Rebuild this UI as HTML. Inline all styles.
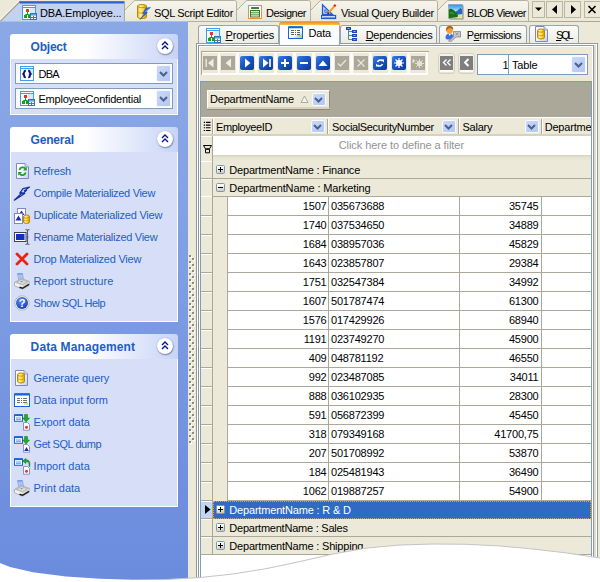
<!DOCTYPE html>
<html><head><meta charset="utf-8"><title>DBA.EmployeeConfidential</title>
<style>
*{box-sizing:border-box;margin:0;padding:0}
html,body{width:600px;height:582px;overflow:hidden;background:#ece9d8}
body{position:relative;font-family:"Liberation Sans",sans-serif;font-size:11px;color:#000;line-height:13px}
.a{position:absolute}
.t{position:absolute;white-space:pre;height:13px;line-height:13px;letter-spacing:-0.3px}
u{text-decoration:underline}
/* sidebar */
#side{left:0;top:22px;width:188px;height:560px;background:linear-gradient(#8aa8e6 0,#86a4e5 150px,#7595e0 380px,#6b8bdd 560px)}
.ph{position:absolute;left:10px;width:168px;height:25px;border-radius:3px 3px 0 0;background:linear-gradient(90deg,#fff 0,#fff 45%,#c7d4f7 100%)}
.ph b{position:absolute;left:21px;top:6px;font-size:11px;color:#215dc6;letter-spacing:.35px;white-space:pre}
.pb{position:absolute;left:10px;width:168px;background:#d6dff7;border:1px solid #fff;border-top:0}
.circ{position:absolute;left:147px;top:4px;width:16px;height:16px;border-radius:8px;background:#fff;box-shadow:.5px 1px 1.5px rgba(80,90,130,.7),0 0 1px rgba(90,110,170,.5)}
.lnk{position:absolute;left:34px;color:#215dc6;white-space:pre;letter-spacing:-0.33px;height:13px;line-height:13px}
.ic{position:absolute;width:16px;height:16px;overflow:visible}
.combo{position:absolute;left:15px;width:158px;height:21px;background:#fff;border:1px solid #7f9db9}
.ddb{position:absolute;width:15px;height:16px;border-radius:2px;background:linear-gradient(135deg,#cad9fc,#b3c6f3);border:1px solid #f6f9ff}
</style></head>
<body>
<svg width="0" height="0" style="position:absolute"><defs><linearGradient id="gold" x1="0" y1="0" x2="1" y2="0"><stop offset="0" stop-color="#e8b010"/><stop offset=".3" stop-color="#fff4a0"/><stop offset=".65" stop-color="#ffd030"/><stop offset="1" stop-color="#d09a00"/></linearGradient><linearGradient id="pg" x1="0" y1="0" x2="1" y2="1"><stop offset="0" stop-color="#fff"/><stop offset=".5" stop-color="#f4f8fe"/><stop offset="1" stop-color="#b8d0f4"/></linearGradient><linearGradient id="dg" x1="0" y1="0" x2="1" y2="1"><stop offset="0" stop-color="#fff"/><stop offset=".55" stop-color="#fff"/><stop offset="1" stop-color="#8cbcf4"/></linearGradient><linearGradient id="sky" x1="0" y1="0" x2="0" y2="1"><stop offset="0" stop-color="#2c8ce8"/><stop offset=".45" stop-color="#a8dcf8"/><stop offset="1" stop-color="#e8f0c0"/></linearGradient><radialGradient id="hb" cx=".4" cy=".3" r=".8"><stop offset="0" stop-color="#5a8cf0"/><stop offset="1" stop-color="#1038b8"/></radialGradient><linearGradient id="eb" x1="0" y1="0" x2=".25" y2="1"><stop offset="0" stop-color="#fff"/><stop offset=".45" stop-color="#f6f4ee"/><stop offset="1" stop-color="#cfcab8"/></linearGradient></defs></svg>
<div id="side" class="a">
<div class="ph" style="top:12px"><span class="t" style="left:20.6px;top:6px;letter-spacing:-0.224px;color:#215dc6;font-size:12px;font-weight:bold;height:14px;line-height:14px;">Object</span><div class="circ"><svg class="a" style="left:4px;top:3px" width="8" height="9" viewBox="0 0 8 9"><path d="M1 4L4 1L7 4M1 8L4 5L7 8" fill="none" stroke="#00138c" stroke-width="1.4"/></svg></div></div>
<div class="pb" style="top:37px;height:56px">
</div>
<div class="combo" style="top:41px"></div>
<div class="combo" style="top:66px"></div>
<span class="t" style="left:38.5px;top:46px;letter-spacing:-0.708px;">DBA</span>
<span class="t" style="left:38.5px;top:71px;letter-spacing:-0.226px;">EmployeeConfidential</span>
<div class="ddb" style="left:156px;top:43px;width:15px;height:17px"><svg class="a" style="left:2px;top:5px" width="9" height="6" viewBox="0 0 9 6"><path d="M1 1L4.5 4.5L8 1" fill="none" stroke="#4d6185" stroke-width="2"/></svg></div>
<div class="ddb" style="left:156px;top:68px;width:15px;height:17px"><svg class="a" style="left:2px;top:5px" width="9" height="6" viewBox="0 0 9 6"><path d="M1 1L4.5 4.5L8 1" fill="none" stroke="#4d6185" stroke-width="2"/></svg></div>
<svg class="a" style="left:20px;top:44px;overflow:visible" width="17" height="17" viewBox="0 0 17 17"><rect x=".5" y=".5" width="13" height="14" fill="#fff" stroke="#3aa0f0"/><rect x="1" y="2" width="12" height="1" fill="#3aa0f0"/><rect x="8" y="3" width="5" height="6" fill="#dbe9fa"/><path d="M5.800 4.800Q4.200 4.800 4.200 6.200T2.500 8Q4.200 8 4.200 9.800T5.800 11.200M8.200 4.800Q9.800 4.800 9.800 6.200T11.500 8Q9.800 8 9.800 9.800T8.200 11.200" fill="none" stroke="#0c0c7c" stroke-width="1.900"/></svg>
<svg class="a" style="left:20px;top:69px;overflow:visible" width="17" height="17" viewBox="0 0 17 17"><rect x=".5" y=".5" width="13" height="14" fill="#fff" stroke="#3aa0f0"/><rect x="1" y="2" width="12" height="1" fill="#3aa0f0"/><rect x="8" y="3" width="5" height="6" fill="#dbe9fa"/><path d="M5.5 7v2M3.5 11v-1.5h4V11" stroke="#18a018" stroke-width="1" fill="none"/><rect x="4" y="4" width="3" height="3" fill="#f03020"/><rect x="2" y="10" width="3" height="3" fill="#18a018"/><rect x="6" y="10" width="3" height="3" fill="#18a018"/><rect x="8.5" y="8.5" width="6" height="6" fill="#fff" stroke="#2878c0"/><rect x="9" y="9" width="5" height="1.6" fill="#5aa2e6"/><path d="M9 12.5h5M11.5 11v3" stroke="#707070" stroke-width="1"/></svg>
<div class="ph" style="top:105px"><span class="t" style="left:20.6px;top:6px;letter-spacing:-0.2px;color:#215dc6;font-size:12px;font-weight:bold;height:14px;line-height:14px;">General</span><div class="circ"><svg class="a" style="left:4px;top:3px" width="8" height="9" viewBox="0 0 8 9"><path d="M1 4L4 1L7 4M1 8L4 5L7 8" fill="none" stroke="#00138c" stroke-width="1.4"/></svg></div></div>
<div class="pb" style="top:130px;height:170px">
</div>
<span class="t" style="left:33.6px;top:143px;letter-spacing:-0.147px;color:#215dc6;">Refresh</span>
<span class="t" style="left:33.6px;top:165px;letter-spacing:-0.32px;color:#215dc6;">Compile Materialized View</span>
<span class="t" style="left:33.6px;top:187px;letter-spacing:-0.238px;color:#215dc6;">Duplicate Materialized View</span>
<span class="t" style="left:33.6px;top:209px;letter-spacing:-0.289px;color:#215dc6;">Rename Materialized View</span>
<span class="t" style="left:33.6px;top:231px;letter-spacing:-0.246px;color:#215dc6;">Drop Materialized View</span>
<span class="t" style="left:33.6px;top:253px;letter-spacing:0.058px;color:#215dc6;">Report structure</span>
<span class="t" style="left:33.6px;top:275px;letter-spacing:-0.489px;color:#215dc6;">Show SQL Help</span>
<svg class="a" style="left:16px;top:141px;overflow:visible" width="17" height="17" viewBox="0 0 17 17"><path d="M.5 .5H9L12.5 4V15.5H.5Z" fill="url(#pg)" stroke="#8484c4"/><path d="M9 .5V4H12.5" fill="#cfe0f8" stroke="#8484c4" stroke-width=".8"/><path d="M3.5 7A3.2 3.2 0 0 1 9.3 5.8" fill="none" stroke="#20a020" stroke-width="1.8"/><path d="M10.8 3.8V7.6H7Z" fill="#20a020"/><path d="M9.6 9.5A3.2 3.2 0 0 1 3.8 10.7" fill="none" stroke="#20a020" stroke-width="1.8"/><path d="M2.2 12.7V8.9H6Z" fill="#20a020"/></svg>
<svg class="a" style="left:14px;top:164px;overflow:visible" width="17" height="17" viewBox="0 0 17 17"><path d="M15.500 1L9 2.600 5.800 7.200 8.200 6.700 0.300 14.200 10.800 7.600 8.600 8 12.500 4.300 10.500 4.800Z" fill="#c4d0f6" stroke="#1632a0" stroke-width="1.200" stroke-linejoin="round"/></svg>
<svg class="a" style="left:14px;top:186px;overflow:visible" width="17" height="17" viewBox="0 0 17 17"><rect x="3.5" y=".5" width="8" height="10" fill="#fff" stroke="#8484c4"/><path d="M7.5 2.5L10.5 7H4.5Z" fill="#1830b0"/><rect x=".5" y="5.500" width="8" height="10" fill="#fff" stroke="#8484c4"/><path d="M4.500 7.5L7.5 12.5H1.5Z" fill="#1830b0"/><path d="M9.5 8.6A3.0 1.6 0 0 1 15.5 8.6V13.9A3.0 1.6 0 0 1 9.5 13.9Z" fill="url(#gold)" stroke="#b88a00" stroke-width="1"/><path d="M9.5 8.6A3.0 1.6 0 0 0 15.5 8.6" fill="none" stroke="#b88a00" stroke-width=".8"/><path d="M9.5 11.25A3.0 1.6 0 0 0 15.5 11.25" fill="none" stroke="#c89a10" stroke-width=".8"/></svg>
<svg class="a" style="left:14px;top:207px;overflow:visible" width="17" height="17" viewBox="0 0 17 17"><rect x=".5" y="3.500" width="11.500" height="9" fill="#fff" stroke="#404048"/><rect x="2" y="5" width="8.500" height="6" fill="#1030c0"/><path d="M11.5 .5Q13.500 .5 13.500 2V14Q13.500 15.5 11.5 15.5M15.5 .5Q13.500 .5 13.500 2M13.500 14Q13.500 15.5 15.5 15.5" fill="none" stroke="#585868" stroke-width="1.1"/><path d="M12.5 8h2" stroke="#585868"/></svg>
<svg class="a" style="left:14px;top:229px;overflow:visible" width="17" height="17" viewBox="0 0 17 17"><path d="M3 3L13 13M13 3L3 13" stroke="#e82418" stroke-width="2.800" stroke-linecap="round"/></svg>
<svg class="a" style="left:14px;top:251px;overflow:visible" width="17" height="17" viewBox="0 0 17 17"><path d="M3.500 .6H8.500L9.600 6.500H4.600Z" fill="#a9c2f6" stroke="#7f9ae4" stroke-width=".6"/><path d="M3.500 .9H8.500" stroke="#6c86d8" stroke-width=".9"/><path d="M.5 9.500L7 5.500 15.500 8.500V12L8.500 16.200 .5 12.800Z" fill="#f2f2f2" stroke="#8c8c8c" stroke-width=".6"/><path d="M.5 9.500L7 5.500 15.500 8.500 8.500 12.500Z" fill="#b9b9b9"/><path d="M3.500 9.200L7.200 7 12.500 8.800 8.600 11.200Z" fill="#d9d9d9"/><path d="M8.500 12.500L15.500 8.500V12L8.500 16.200Z" fill="#d2d2d2"/><path d="M5.500 14.300L8.600 15.300 15 11.300" fill="none" stroke="#1c1c1c" stroke-width="1.500"/><path d="M6.800 8.600h1.600" stroke="#30b040" stroke-width="1"/></svg>
<svg class="a" style="left:14px;top:273px;overflow:visible" width="17" height="17" viewBox="0 0 17 17"><circle cx="8" cy="8" r="7.2" fill="#f4f4f4" stroke="#a8a8b0" stroke-width=".8"/><circle cx="8" cy="8" r="6" fill="url(#hb)"/><text x="8" y="12" text-anchor="middle" font-family="Liberation Sans,sans-serif" font-weight="bold" font-size="11" fill="#fff">?</text></svg>
<div class="ph" style="top:312px"><span class="t" style="left:20.6px;top:6px;letter-spacing:0.12px;color:#215dc6;font-size:12px;font-weight:bold;height:14px;line-height:14px;">Data Management</span><div class="circ"><svg class="a" style="left:4px;top:3px" width="8" height="9" viewBox="0 0 8 9"><path d="M1 4L4 1L7 4M1 8L4 5L7 8" fill="none" stroke="#00138c" stroke-width="1.4"/></svg></div></div>
<div class="pb" style="top:337px;height:148px">
</div>
<span class="t" style="left:33.6px;top:350px;letter-spacing:-0.053px;color:#215dc6;">Generate query</span>
<span class="t" style="left:33.6px;top:372px;letter-spacing:-0.06px;color:#215dc6;">Data input form</span>
<span class="t" style="left:33.6px;top:394px;letter-spacing:0.003px;color:#215dc6;">Export data</span>
<span class="t" style="left:33.6px;top:416px;letter-spacing:-0.456px;color:#215dc6;">Get SQL dump</span>
<span class="t" style="left:33.6px;top:438px;letter-spacing:0.06px;color:#215dc6;">Import data</span>
<span class="t" style="left:33.6px;top:460px;letter-spacing:-0.069px;color:#215dc6;">Print data</span>
<svg class="a" style="left:15px;top:348px;overflow:visible" width="17" height="17" viewBox="0 0 17 17"><path d="M.5 .5H9L12.5 4V15.5H.5Z" fill="url(#pg)" stroke="#8484c4"/><path d="M9 .5V4H12.5" fill="#cfe0f8" stroke="#8484c4" stroke-width=".8"/><path d="M2.5 4.6A3.5 1.6 0 0 1 9.5 4.6V11.4A3.5 1.6 0 0 1 2.5 11.4Z" fill="url(#gold)" stroke="#b88a00" stroke-width="1"/><path d="M2.5 4.6A3.5 1.6 0 0 0 9.5 4.6" fill="none" stroke="#b88a00" stroke-width=".8"/><path d="M2.5 8.0A3.5 1.6 0 0 0 9.5 8.0" fill="none" stroke="#c89a10" stroke-width=".8"/></svg>
<svg class="a" style="left:14px;top:370px;overflow:visible" width="17" height="17" viewBox="0 0 17 17"><rect x=".5" y="2" width="15" height="12.500" fill="#fff" stroke="#1464dc"/><rect x=".5" y="1.300" width="15" height="2.200" rx=".6" fill="#1464dc"/><path d="M3 6.500h3M7 6.500h1M9 6.500h4M3 8.500h3M7 8.500h1M9 8.500h4M3 10.500h3M7 10.500h1M9 10.500h4" stroke="#707070" stroke-width="1"/><path d="M10 12h3.500v-1.200" fill="none" stroke="#e0d020" stroke-width="1.200"/></svg>
<svg class="a" style="left:14px;top:392px;overflow:visible" width="17" height="17" viewBox="0 0 17 17"><rect x=".5" y=".8" width="8" height="6.500" fill="#fff" stroke="#1464dc"/><rect x=".5" y=".3" width="8" height="1.800" fill="#1464dc"/><path d="M2 4h5M2 5.700h5" stroke="#5a9ae8" stroke-width="1"/><path d="M9.500 8.500h4L15.500 10.500V16.200H9.500Z" fill="#fff" stroke="#8484c4" stroke-width=".9"/><circle cx="12.500" cy="13.200" r="1.500" fill="#f03020"/><path d="M10.500 .5h3V4h2L12 8 8.800 4h1.700Z" fill="#20a828" stroke="#107018" stroke-width=".5"/></svg>
<svg class="a" style="left:14px;top:414px;overflow:visible" width="17" height="17" viewBox="0 0 17 17"><rect x=".5" y=".8" width="8" height="6.500" fill="#fff" stroke="#1464dc"/><rect x=".5" y=".3" width="8" height="1.800" fill="#1464dc"/><path d="M2 4h5M2 5.700h5" stroke="#5a9ae8" stroke-width="1"/><path d="M9.500 8.500h4L15.500 10.500V16.200H9.500Z" fill="#fff" stroke="#8484c4" stroke-width=".9"/><path d="M12.500 11L14.800 15H10.200Z" fill="#1830b0"/><path d="M10.500 .5h3V4h2L12 8 8.800 4h1.700Z" fill="#20a828" stroke="#107018" stroke-width=".5"/></svg>
<svg class="a" style="left:14px;top:436px;overflow:visible" width="17" height="17" viewBox="0 0 17 17"><rect x=".5" y=".8" width="8" height="6.500" fill="#fff" stroke="#1464dc"/><rect x=".5" y=".3" width="8" height="1.800" fill="#1464dc"/><path d="M2 4h5M2 5.700h5" stroke="#5a9ae8" stroke-width="1"/><path d="M9.500 8.500h4L15.500 10.500V16.200H9.500Z" fill="#fff" stroke="#8484c4" stroke-width=".9"/><circle cx="12.500" cy="13.200" r="1.500" fill="#f03020"/><path d="M15.500 8V5.500Q15.500 3 12.500 3V5L8.800 2.500 12.500 0V1.200Q16.500 1.200 16.300 5.500V8Z" fill="#20a828" stroke="#107018" stroke-width=".5" transform="translate(-.5 .5)"/></svg>
<svg class="a" style="left:14px;top:458px;overflow:visible" width="17" height="17" viewBox="0 0 17 17"><path d="M3.500 .6H8.500L9.600 6.500H4.600Z" fill="#a9c2f6" stroke="#7f9ae4" stroke-width=".6"/><path d="M3.500 .9H8.500" stroke="#6c86d8" stroke-width=".9"/><path d="M.5 9.500L7 5.500 15.500 8.500V12L8.500 16.200 .5 12.800Z" fill="#f2f2f2" stroke="#8c8c8c" stroke-width=".6"/><path d="M.5 9.500L7 5.500 15.500 8.500 8.500 12.500Z" fill="#b9b9b9"/><path d="M3.500 9.200L7.200 7 12.500 8.800 8.600 11.200Z" fill="#d9d9d9"/><path d="M8.500 12.500L15.500 8.500V12L8.500 16.200Z" fill="#d2d2d2"/><path d="M5.500 14.300L8.600 15.300 15 11.300" fill="none" stroke="#1c1c1c" stroke-width="1.500"/><path d="M6.800 8.600h1.600" stroke="#30b040" stroke-width="1"/></svg>
</div>
<svg class="a" style="left:0;top:0" width="600" height="23" viewBox="0 0 600 23">
<defs><linearGradient id="tg" x1="0" y1="0" x2="0" y2="1"><stop offset="0" stop-color="#f6f5ee"/><stop offset="1" stop-color="#e9e7d9"/></linearGradient></defs>
<rect x="0" y="21" width="600" height="1" fill="#aca899"/>
<path d="M426.5 21.5L447 1Q447.6 .5 449 .5L526.5 .5Q528.5 .5 528.5 2.5L528.5 21.5Z" fill="url(#tg)" stroke="#b4b1a0" stroke-width="1"/>
<path d="M299.5 21.5L320 1Q320.6 .5 322 .5L435.5 .5Q437.5 .5 437.5 2.5L437.5 21.5Z" fill="url(#tg)" stroke="#b4b1a0" stroke-width="1"/>
<path d="M225.5 21.5L246 1Q246.6 .5 248 .5L308.5 .5Q310.5 .5 310.5 2.5L310.5 21.5Z" fill="url(#tg)" stroke="#b4b1a0" stroke-width="1"/>
<path d="M113.5 21.5L134 1Q134.6 .5 136 .5L234.5 .5Q236.5 .5 236.5 2.5L236.5 21.5Z" fill="url(#tg)" stroke="#b4b1a0" stroke-width="1"/>
<path d="M0 22L0 21.5L20 1.500L124.500 1.500L124.500 22Z" fill="#c3d2f1"/>
<path d="M-1.200 21.5L19.300 1" fill="none" stroke="#fbfaf2" stroke-width="1.200"/>
<path d="M0 21.5L20.5 1" fill="none" stroke="#a39f8c" stroke-width="1.100"/>
<rect x="19.500" y="1.200" width="105" height="2.300" fill="#2f60c9"/>
<rect x="124" y="3" width="1" height="18" fill="#aca899"/>
<rect x="532.5" y="1.5" width="12" height="16" fill="none" stroke="#b9b6a6"/>
<rect x="546.5" y="1.5" width="16" height="16" fill="none" stroke="#b9b6a6"/>
<rect x="564.5" y="1.5" width="16" height="16" fill="none" stroke="#b9b6a6"/>
<rect x="584.5" y="1.5" width="16" height="16" fill="none" stroke="#b9b6a6"/>
<path d="M535 7.5L542 7.5L538.5 11Z" fill="#000"/>
<path d="M557 5L557 14L552 9.5Z" fill="#000"/>
<path d="M571 5L571 14L576 9.5Z" fill="#000"/>
<path d="M588.5 6L595.5 13M595.5 6L588.5 13" stroke="#000" stroke-width="1.6" fill="none"/>
<rect x="0" y="21" width="188" height="1" fill="#a9beeb"/>
</svg>
<span class="t" style="left:40px;top:7px;letter-spacing:-0.151px;">DBA.Employee...</span>
<span class="t" style="left:154px;top:7px;letter-spacing:-0.328px;">SQL Script Editor</span>
<span class="t" style="left:266px;top:7px;letter-spacing:-0.504px;">Designer</span>
<span class="t" style="left:341px;top:7px;letter-spacing:-0.369px;">Visual Query Builder</span>
<span class="t" style="left:467px;top:7px;letter-spacing:-0.639px;">BLOB Viewer</span>
<svg class="a" style="left:22px;top:5px;overflow:visible" width="17" height="17" viewBox="0 0 17 17"><rect x=".5" y=".5" width="13" height="14" fill="#fff" stroke="#3aa0f0"/><rect x="1" y="2" width="12" height="1" fill="#3aa0f0"/><rect x="8" y="3" width="5" height="6" fill="#dbe9fa"/><path d="M5.5 7v2M3.5 11v-1.5h4V11" stroke="#18a018" stroke-width="1" fill="none"/><rect x="4" y="4" width="3" height="3" fill="#f03020"/><rect x="2" y="10" width="3" height="3" fill="#18a018"/><rect x="6" y="10" width="3" height="3" fill="#18a018"/><rect x="8.5" y="8.5" width="6" height="6" fill="#fff" stroke="#2878c0"/><rect x="9" y="9" width="5" height="1.6" fill="#5aa2e6"/><path d="M9 12.5h5M11.5 11v3" stroke="#707070" stroke-width="1"/></svg>
<svg class="a" style="left:137px;top:3px;overflow:visible" width="17" height="17" viewBox="0 0 17 17"><path d="M0.5 3.1A4.5 1.6 0 0 1 9.5 3.1V13.9A4.5 1.6 0 0 1 0.5 13.9Z" fill="url(#gold)" stroke="#b88a00" stroke-width="1"/><path d="M0.5 3.1A4.5 1.6 0 0 0 9.5 3.1" fill="none" stroke="#b88a00" stroke-width=".8"/><path d="M0.5 8.5A4.5 1.6 0 0 0 9.5 8.5" fill="none" stroke="#c89a10" stroke-width=".8"/><path d="M13.5 4.5L8 9.5h2.5L3 16.5l4.5-6H5.5L9 5Z" fill="#2a6ae0" stroke="#1a48b0" stroke-width=".5"/><path d="M12 5.5L8.5 9" stroke="#9cc4ff" stroke-width=".8"/></svg>
<svg class="a" style="left:248px;top:5px;overflow:visible" width="17" height="17" viewBox="0 0 17 17"><rect x=".5" y=".5" width="13" height="13" fill="#fff" stroke="#e0944a"/><rect x="3" y="2" width="8" height="2" rx=".5" fill="#2e8b2e"/><rect x="2.5" y="5.5" width="9" height="6.5" fill="#e8f4e0" stroke="#2a7a32"/><path d="M3 7.7h8M3 9.8h8" stroke="#3c9a3c" stroke-width="1"/><path d="M5.2 6v6M7.2 6v6M9.2 6v6" stroke="#e8a880" stroke-width=".7"/></svg>
<svg class="a" style="left:321px;top:4px;overflow:visible" width="17" height="17" viewBox="0 0 17 17"><path d="M1.5 .8V10.5H11.5Z" fill="#d8d4fa" stroke="#1e5ad8" stroke-width="1.3"/><path d="M3.8 5.5V8.3H6.8Z" fill="#f4f3ee" stroke="#1e5ad8" stroke-width=".9"/><rect x=".6" y="11.5" width="14" height="3" fill="#e8e6fc" stroke="#1e5ad8" stroke-width="1.2"/><path d="M2.5 13.5h1M4.5 13.5h1M6.5 13.5h1M8.5 13.5h1M10.5 13.5h1M12.5 13.5h1" stroke="#1e5ad8" stroke-width="1"/><path d="M14.2 1.2L7.5 9" stroke="#f0a020" stroke-width="2"/><path d="M14.6 .8L13.2 2.4" stroke="#e02030" stroke-width="2.2"/><path d="M7.8 8.6L6.6 10" stroke="#403020" stroke-width="1.6"/></svg>
<svg class="a" style="left:448px;top:4px;overflow:visible" width="17" height="17" viewBox="0 0 17 17"><rect x="1.5" y="1.5" width="14" height="14" fill="#8a8a92"/><rect x=".5" y=".5" width="14" height="14" fill="url(#sky)" stroke="#9a9aa2" stroke-width=".6"/><path d="M7 8.500L12.500 4l1.700 1.500V10.500H7Z" fill="#2468cc"/><path d="M.8 5.500Q3 4 5.500 6Q9 8 10.500 13L.8 14.200Z" fill="#1a6e1a"/><path d="M2 9Q4 8 6 10" stroke="#3c9a30" stroke-width="1.500" fill="none"/><path d="M9 14.2Q10 10.5 14.2 10V14.2Z" fill="#e6e690"/><path d="M2 2.5h4M3 3.5h5" stroke="#5ab0f0" stroke-width="1"/></svg>
<svg class="a" style="left:189px;top:255px" width="7" height="189" viewBox="0 0 7 189"><defs><pattern id="dots" x="0" y="0" width="7" height="6" patternUnits="userSpaceOnUse"><rect x="1" y="1" width="2" height="2" fill="#fff"/><rect x="0" y="0" width="2" height="2" fill="#8d8b7c"/><rect x="4" y="4" width="2" height="2" fill="#fff"/><rect x="3" y="3" width="2" height="2" fill="#8d8b7c"/></pattern></defs><rect width="7" height="189" fill="url(#dots)"/></svg>
<div class="a" style="left:198px;top:25px;width:81px;height:19px;border:1px solid #91a7b4;border-bottom:0;border-radius:3px 3px 0 0;background:linear-gradient(#fbfbf9,#ecebe4)"></div>
<span class="t" style="left:225.5px;top:29px;letter-spacing:-0.164px;"><u>P</u>roperties</span>
<div class="a" style="left:340px;top:25px;width:97px;height:19px;border:1px solid #91a7b4;border-bottom:0;border-radius:3px 3px 0 0;background:linear-gradient(#fbfbf9,#ecebe4)"></div>
<span class="t" style="left:365.7px;top:29px;letter-spacing:-0.304px;"><u>D</u>ependencies</span>
<div class="a" style="left:439px;top:25px;width:88px;height:19px;border:1px solid #91a7b4;border-bottom:0;border-radius:3px 3px 0 0;background:linear-gradient(#fbfbf9,#ecebe4)"></div>
<span class="t" style="left:466.8px;top:29px;letter-spacing:-0.519px;">P<u>e</u>rmissions</span>
<div class="a" style="left:529px;top:25px;width:50px;height:19px;border:1px solid #91a7b4;border-bottom:0;border-radius:3px 3px 0 0;background:linear-gradient(#fbfbf9,#ecebe4)"></div>
<span class="t" style="left:556px;top:29px;letter-spacing:-2.139px;"><u>S</u>QL</span>
<div class="a" style="left:196px;top:43px;width:402px;height:560px;border:1px solid #919b9c;background:#fff"></div>
<div class="a" style="left:594px;top:45px;width:2px;height:560px;background:#dfdccb"></div>
<div class="a" style="left:198px;top:45px;width:396px;height:560px;border:1px solid #919b9c;background:#fff"></div>
<div class="a" style="left:200px;top:47px;width:392px;height:560px;background:#ece9d8"></div>
<div class="a" style="left:279px;top:22px;width:61px;height:23px;border:1px solid #91a7b4;border-bottom:0;border-radius:3px 3px 0 0;background:#fcfcfe"></div>
<div class="a" style="left:279px;top:22px;width:61px;height:3px;border-radius:3px 3px 0 0;background:linear-gradient(#e68b2c,#ffc73c)"></div>
<span class="t" style="left:308.5px;top:27px;letter-spacing:-0.188px;">Data</span>
<svg class="a" style="left:206px;top:28px;overflow:visible" width="17" height="17" viewBox="0 0 17 17"><rect x=".5" y=".5" width="13" height="14" fill="#fff" stroke="#3aa0f0"/><rect x="1" y="2" width="12" height="1" fill="#3aa0f0"/><rect x="8" y="3" width="5" height="6" fill="#dbe9fa"/><path d="M5.5 7v2M3.5 11v-1.5h4V11" stroke="#18a018" stroke-width="1" fill="none"/><rect x="4" y="4" width="3" height="3" fill="#f03020"/><rect x="2" y="10" width="3" height="3" fill="#18a018"/><rect x="6" y="10" width="3" height="3" fill="#18a018"/><rect x="8.5" y="8.5" width="6" height="6" fill="#fff" stroke="#2878c0"/><rect x="9" y="9" width="5" height="1.6" fill="#5aa2e6"/><path d="M9 12.5h5M11.5 11v3" stroke="#707070" stroke-width="1"/></svg>
<svg class="a" style="left:288px;top:26px;overflow:visible" width="17" height="17" viewBox="0 0 17 17"><rect x=".5" y="1" width="14" height="11.500" fill="url(#dg)" stroke="#1464dc"/><rect x=".5" y=".3" width="14" height="2" rx=".6" fill="#1464dc"/><path d="M3 4.5h3M7 4.5h1M9 4.5h3M3 6.5h3M7 6.5h1M9 6.5h3M3 8.5h3M7 8.5h1M9 8.5h3" stroke="#606060" stroke-width="1"/><path d="M9 10h4V8.8" fill="none" stroke="#c8c820" stroke-width="1.2"/></svg>
<svg class="a" style="left:346px;top:26px;overflow:visible" width="17" height="17" viewBox="0 0 17 17"><path d="M2.5 3v10.5M2.5 5.5h4M2.5 9.5h4M2.5 13.5h4" stroke="#3c82e6" stroke-width="1" fill="none"/><rect x="0" y="1" width="5" height="3" fill="#1e46c0"/><path d="M1.5 2.5h2" stroke="#8ab4f8"/><rect x="6" y="4" width="5" height="3" fill="#1e46c0"/><rect x="6" y="8" width="5" height="3" fill="#1e46c0"/><rect x="6" y="12" width="5" height="3" fill="#1e46c0"/><path d="M7.5 5.5h2M7.5 9.5h2M7.5 13.5h2" stroke="#8ab4f8"/></svg>
<svg class="a" style="left:445px;top:25px;overflow:visible" width="17" height="17" viewBox="0 0 17 17"><path d="M15.5 6.5h-7v5.5l-5 4 2.5.5 5-4.5h4.5Z" fill="#c8c8c8" stroke="#787878" stroke-width=".7"/><path d="M10.5 7.5l3 3M13.5 7.5l-3 3" stroke="#909090" stroke-width=".8"/><path d="M.5 13Q.5 8.5 4.5 8.5T8 12L5 14.5Q.5 15 .5 13Z" fill="#3c6ee0"/><path d="M3.5 8.8L4.8 11 6 8.8Z" fill="#fff"/><circle cx="4.6" cy="5" r="3.4" fill="#f9a030"/><path d="M1 5Q1 .8 4.8 1T8.2 4.5Q6 2.5 3.5 3.5Q2 4 1.6 6Z" fill="#a86410"/></svg>
<svg class="a" style="left:535px;top:26px;overflow:visible" width="17" height="17" viewBox="0 0 17 17"><path d="M.5 .5H9L12.5 4V15.5H.5Z" fill="url(#pg)" stroke="#8484c4"/><path d="M9 .5V4H12.5" fill="#cfe0f8" stroke="#8484c4" stroke-width=".8"/><path d="M2.5 4.6A3.5 1.6 0 0 1 9.5 4.6V11.4A3.5 1.6 0 0 1 2.5 11.4Z" fill="url(#gold)" stroke="#b88a00" stroke-width="1"/><path d="M2.5 4.6A3.5 1.6 0 0 0 9.5 4.6" fill="none" stroke="#b88a00" stroke-width=".8"/><path d="M2.5 8.0A3.5 1.6 0 0 0 9.5 8.0" fill="none" stroke="#c89a10" stroke-width=".8"/></svg>
<div class="a" style="left:201px;top:51px;width:227px;height:24px;border-top:1px solid #aca899;border-left:1px solid #aca899;background:#fdfcfa"></div>
<div class="a" style="left:428px;top:51px;width:1px;height:1px;background:#aca899"></div>
<div class="a" style="left:202px;top:53px;width:16px;height:20px;background:#ece9d8"></div>
<div class="a" style="left:203px;top:56px;width:14px;height:14px;border-radius:0px;background:#aca899"><svg width="14" height="14" viewBox="0 0 14 14" style="display:block"><path d="M3.2 3v8" stroke="#efede4" stroke-width="1.4"/><path d="M10.5 2.5v9L5 7z" fill="#efede4"/></svg></div>
<div class="a" style="left:220px;top:53px;width:16px;height:20px;background:#ece9d8"></div>
<div class="a" style="left:221px;top:56px;width:14px;height:14px;border-radius:0px;background:#aca899"><svg width="14" height="14" viewBox="0 0 14 14" style="display:block"><path d="M10 2.5v9L4.5 7z" fill="#efede4"/></svg></div>
<div class="a" style="left:239px;top:53px;width:16px;height:20px;background:#ece9d8"></div>
<div class="a" style="left:240px;top:56px;width:14px;height:14px;border-radius:2px;background:linear-gradient(135deg,#3c80ea 0,#1e5ccc 35%,#1448ae 70%,#0c3a98 100%)"><svg width="14" height="14" viewBox="0 0 14 14" style="display:block"><path d="M5 2.5v9L10.5 7z" fill="#fff"/></svg></div>
<div class="a" style="left:258px;top:53px;width:16px;height:20px;background:#ece9d8"></div>
<div class="a" style="left:259px;top:56px;width:14px;height:14px;border-radius:2px;background:linear-gradient(135deg,#3c80ea 0,#1e5ccc 35%,#1448ae 70%,#0c3a98 100%)"><svg width="14" height="14" viewBox="0 0 14 14" style="display:block"><path d="M4 2.5v9L9.5 7z" fill="#fff"/><path d="M11 3v8" stroke="#fff" stroke-width="1.6"/></svg></div>
<div class="a" style="left:277px;top:53px;width:16px;height:20px;background:#ece9d8"></div>
<div class="a" style="left:278px;top:56px;width:14px;height:14px;border-radius:2px;background:linear-gradient(135deg,#3c80ea 0,#1e5ccc 35%,#1448ae 70%,#0c3a98 100%)"><svg width="14" height="14" viewBox="0 0 14 14" style="display:block"><path d="M7 3v8M3 7h8" stroke="#fff" stroke-width="2"/></svg></div>
<div class="a" style="left:296px;top:53px;width:16px;height:20px;background:#ece9d8"></div>
<div class="a" style="left:297px;top:56px;width:14px;height:14px;border-radius:2px;background:linear-gradient(135deg,#3c80ea 0,#1e5ccc 35%,#1448ae 70%,#0c3a98 100%)"><svg width="14" height="14" viewBox="0 0 14 14" style="display:block"><path d="M3 7h8" stroke="#fff" stroke-width="2"/></svg></div>
<div class="a" style="left:315px;top:53px;width:16px;height:20px;background:#ece9d8"></div>
<div class="a" style="left:316px;top:56px;width:14px;height:14px;border-radius:2px;background:linear-gradient(135deg,#3c80ea 0,#1e5ccc 35%,#1448ae 70%,#0c3a98 100%)"><svg width="14" height="14" viewBox="0 0 14 14" style="display:block"><path d="M2.5 10h9L7 4.5z" fill="#fff"/></svg></div>
<div class="a" style="left:334px;top:53px;width:16px;height:20px;background:#ece9d8"></div>
<div class="a" style="left:335px;top:56px;width:14px;height:14px;border-radius:0px;background:#aca899"><svg width="14" height="14" viewBox="0 0 14 14" style="display:block"><path d="M3 7.5L5.5 10L11 4" stroke="#eae8de" stroke-width="1.200" fill="none"/></svg></div>
<div class="a" style="left:353px;top:53px;width:16px;height:20px;background:#ece9d8"></div>
<div class="a" style="left:354px;top:56px;width:14px;height:14px;border-radius:0px;background:#aca899"><svg width="14" height="14" viewBox="0 0 14 14" style="display:block"><path d="M3.5 3.5L10.5 10.5M10.5 3.5L3.5 10.5" stroke="#eae8de" stroke-width="1.100" fill="none"/></svg></div>
<div class="a" style="left:372px;top:53px;width:16px;height:20px;background:#ece9d8"></div>
<div class="a" style="left:373px;top:56px;width:14px;height:14px;border-radius:2px;background:linear-gradient(135deg,#3c80ea 0,#1e5ccc 35%,#1448ae 70%,#0c3a98 100%)"><svg width="14" height="14" viewBox="0 0 14 14" style="display:block"><path d="M4.5 6A3 3 0 0 1 9.5 5M9.5 8A3 3 0 0 1 4.5 9" stroke="#fff" stroke-width="1.6" fill="none"/><path d="M8 3.5h3v3zM6 10.5h-3v-3z" fill="#fff"/></svg></div>
<div class="a" style="left:391px;top:53px;width:16px;height:20px;background:#ece9d8"></div>
<div class="a" style="left:392px;top:56px;width:14px;height:14px;border-radius:2px;background:linear-gradient(135deg,#3c80ea 0,#1e5ccc 35%,#1448ae 70%,#0c3a98 100%)"><svg width="14" height="14" viewBox="0 0 14 14" style="display:block"><circle cx="7" cy="7" r="3" fill="#fff"/><path d="M7 2v10M2 7h10M3.5 3.5l7 7M10.5 3.5l-7 7" stroke="#fff" stroke-width="1.2"/></svg></div>
<div class="a" style="left:410px;top:53px;width:16px;height:20px;background:#ece9d8"></div>
<div class="a" style="left:411px;top:56px;width:14px;height:14px;border-radius:0px;background:#aca899"><svg width="14" height="14" viewBox="0 0 14 14" style="display:block"><circle cx="8.5" cy="7.5" r="2.6" fill="#e4e2d6"/><path d="M8.5 3v9M4 7.5h9M5.3 4.3l6.4 6.4M11.7 4.3l-6.4 6.4" stroke="#e4e2d6" stroke-width="1"/><path d="M1.5 2.5v5L4.5 5z" fill="#e4e2d6"/></svg></div>
<div class="a" style="left:438px;top:53px;width:17px;height:21px;border:1px solid #d5d2c2;border-radius:3px;background:linear-gradient(#f4f3ee,#e6e3d4)"></div>
<div class="a" style="left:439.5px;top:69.500px;width:13.500px;height:2px;background:#fbfaf6"></div>
<div class="a" style="left:439.5px;top:55.500px;width:13.500px;height:14.200px;background:#7e7e7e"><svg width="13" height="13" viewBox="0 0 13 13" style="display:block;margin-top:.5px"><path d="M6.5 3.5L3.5 6.5L6.5 9.5M10.5 3.5L7.5 6.5L10.5 9.5" stroke="#fff" stroke-width="1.4" fill="none"/></svg></div>
<div class="a" style="left:458px;top:53px;width:17px;height:21px;border:1px solid #d5d2c2;border-radius:3px;background:linear-gradient(#f4f3ee,#e6e3d4)"></div>
<div class="a" style="left:459.5px;top:69.500px;width:13.500px;height:2px;background:#fbfaf6"></div>
<div class="a" style="left:459.5px;top:55.500px;width:13.500px;height:14.200px;background:#7e7e7e"><svg width="13" height="13" viewBox="0 0 13 13" style="display:block;margin-top:.5px"><path d="M8.5 3L5 6.5L8.5 10" stroke="#fff" stroke-width="2" fill="none"/></svg></div>
<div class="a" style="left:477px;top:54px;width:32px;height:21px;border:1px solid #7f9db9;background:#fff"></div>
<span class="t" style="left:502.500px;top:59px">1</span>
<div class="a" style="left:508px;top:54px;width:80px;height:21px;border:1px solid #7f9db9;background:#fff"></div>
<span class="t" style="left:512px;top:59px;letter-spacing:-0.159px;">Table</span>
<div class="ddb" style="left:571px;top:56px;width:15px;height:17px"><svg class="a" style="left:2px;top:5px" width="9" height="6" viewBox="0 0 9 6"><path d="M1 1L4.5 4.5L8 1" fill="none" stroke="#4d6185" stroke-width="2"/></svg></div>
<div class="a" style="left:200px;top:81px;width:392px;height:520px;border:1px solid #7f9db9;border-bottom:0;background:#ece9d8"></div>
<div class="a" style="left:201px;top:82px;width:390px;height:35px;background:#aca899"></div>
<div class="a" style="left:207px;top:90px;width:123px;height:19px;background:#ece9d8;border-top:1px solid #fff;border-left:1px solid #fff;border-right:1px solid #8d8a7c;border-bottom:2px solid #d8d2bd;box-shadow:0 1px 0 #8d8a7c"></div>
<span class="t" style="left:210px;top:93px;letter-spacing:-0.202px;">DepartmentName</span>
<svg class="a" style="left:299.500px;top:95px" width="9" height="8" viewBox="0 0 9 8"><path d="M4.5 1L8 7.5H1z" fill="#f4f3ec" stroke="#9c9988" stroke-width=".8"/></svg>
<div class="ddb" style="left:312px;top:93px;width:14px;height:13px"><svg class="a" style="left:1px;top:3px" width="9" height="6" viewBox="0 0 9 6"><path d="M1 1L4.5 4.5L8 1" fill="none" stroke="#4d6185" stroke-width="2"/></svg></div>
<div class="a" style="left:201px;top:117px;width:390px;height:19px;background:#ece9d8;border-top:1px solid #fff;border-bottom:2px solid #d8d2bd;box-shadow:0 1px 0 #c2beab"></div>
<svg class="a" style="left:203px;top:121px" width="9" height="11" viewBox="0 0 9 11"><path d="M.8 1.400h1.200M2.900 1.400h4.600M.8 4.100h1.200M2.900 4.100h4.600M.8 6.800h1.200M2.900 6.800h4.600M.8 9.500h1.200M2.900 9.500h4.600" stroke="#000" stroke-width="1.100"/></svg>
<div class="a" style="left:212px;top:119px;width:1px;height:15px;background:#aca899"></div><div class="a" style="left:213px;top:119px;width:1px;height:15px;background:#fff"></div>
<div class="a" style="left:327px;top:119px;width:1px;height:15px;background:#aca899"></div><div class="a" style="left:328px;top:119px;width:1px;height:15px;background:#fff"></div>
<div class="a" style="left:458px;top:119px;width:1px;height:15px;background:#aca899"></div><div class="a" style="left:459px;top:119px;width:1px;height:15px;background:#fff"></div>
<div class="a" style="left:541px;top:119px;width:1px;height:15px;background:#aca899"></div><div class="a" style="left:542px;top:119px;width:1px;height:15px;background:#fff"></div>
<span class="t" style="left:216px;top:121px;letter-spacing:-0.392px;">EmployeeID</span>
<span class="t" style="left:332px;top:121px;letter-spacing:-0.351px;">SocialSecurityNumber</span>
<span class="t" style="left:462.5px;top:121px;letter-spacing:-0.248px;">Salary</span>
<div class="a" style="left:544px;top:118px;width:47px;height:17px;overflow:hidden"><span class="t" style="left:0.7px;top:3px;letter-spacing:-0.202px;">DepartmentName</span></div>
<div class="ddb" style="left:311px;top:120px;width:14px;height:13px"><svg class="a" style="left:1px;top:3px" width="9" height="6" viewBox="0 0 9 6"><path d="M1 1L4.5 4.5L8 1" fill="none" stroke="#4d6185" stroke-width="2"/></svg></div>
<div class="ddb" style="left:442px;top:120px;width:14px;height:13px"><svg class="a" style="left:1px;top:3px" width="9" height="6" viewBox="0 0 9 6"><path d="M1 1L4.5 4.5L8 1" fill="none" stroke="#4d6185" stroke-width="2"/></svg></div>
<div class="ddb" style="left:525px;top:120px;width:14px;height:13px"><svg class="a" style="left:1px;top:3px" width="9" height="6" viewBox="0 0 9 6"><path d="M1 1L4.5 4.5L8 1" fill="none" stroke="#4d6185" stroke-width="2"/></svg></div>
<div class="a" style="left:201px;top:136px;width:11px;height:25px;background:#ece9d8;border-top:1px solid #fff"></div>
<div class="a" style="left:212px;top:136px;width:1px;height:19px;background:#aca899"></div>
<div class="a" style="left:213px;top:136px;width:378px;height:19px;background:#fff"></div>
<div class="a" style="left:213px;top:155px;width:378px;height:6px;background:linear-gradient(#d6d2c0,#e6e3d2 40%,#ece9d8)"></div>
<svg class="a" style="left:203px;top:145px" width="9" height="9" viewBox="0 0 9 9"><path d="M.5 .5h8l-2 3.300h-4zM2.500 4.300h4v3.500h-4z" fill="none" stroke="#000" stroke-width="1"/></svg>
<span class="t" style="left:338.7px;top:139px;letter-spacing:-0.065px;color:#939393;">Click here to define a filter</span>
<div class="a" style="left:212px;top:155px;width:1px;height:400px;background:#aca899"></div>
<div class="a" style="left:201px;top:161px;width:11px;height:18px;background:#ece9d8;border-top:1px solid #fff;border-bottom:1px solid #aca899"></div>
<div class="a" style="left:213px;top:178px;width:378px;height:1px;background:#aca899"></div>
<svg class="a" style="left:216px;top:165px" width="9" height="9" viewBox="0 0 9 9"><rect x=".5" y=".5" width="8" height="8" rx="1" fill="url(#eb)" stroke="#7898b5"/><path d="M2 4.5h5M4.5 2v5" stroke="#000" stroke-width="1"/></svg>
<span class="t" style="left:229.3px;top:164px;letter-spacing:-0.18px;color:#000;">DepartmentName : Finance</span>
<div class="a" style="left:201px;top:179px;width:11px;height:18px;background:#ece9d8;border-top:1px solid #fff;border-bottom:1px solid #aca899"></div>
<div class="a" style="left:213px;top:196px;width:378px;height:1px;background:#aca899"></div>
<svg class="a" style="left:216px;top:183px" width="9" height="9" viewBox="0 0 9 9"><rect x=".5" y=".5" width="8" height="8" rx="1" fill="url(#eb)" stroke="#7898b5"/><path d="M2 4.5h5" stroke="#000" stroke-width="1"/></svg>
<span class="t" style="left:229.3px;top:182px;letter-spacing:-0.115px;color:#000;">DepartmentName : Marketing</span>
<div class="a" style="left:227px;top:196px;width:364px;height:305px;background:#fff;border-left:1px solid #aca899;border-top:1px solid #aca899"></div>
<div class="a" style="left:328px;top:197px;width:1px;height:304px;background:#aca899"></div>
<div class="a" style="left:459px;top:197px;width:1px;height:304px;background:#aca899"></div>
<div class="a" style="left:541px;top:197px;width:1px;height:304px;background:#aca899"></div>
<div class="a" style="left:201px;top:196px;width:11px;height:20px;background:#ece9d8;border-top:1px solid #fff;border-bottom:1px solid #aca899"></div>
<div class="a" style="left:228px;top:215px;width:363px;height:1px;background:#aca899"></div>
<span class="t" style="left:228px;width:98.500px;text-align:right;top:200px;letter-spacing:-.2px">1507</span>
<span class="t" style="left:331px;top:200px;letter-spacing:-.2px">035673688</span>
<span class="t" style="left:459px;width:79.500px;text-align:right;top:200px;letter-spacing:-.2px">35745</span>
<div class="a" style="left:201px;top:216px;width:11px;height:19px;background:#ece9d8;border-top:1px solid #fff;border-bottom:1px solid #aca899"></div>
<div class="a" style="left:228px;top:234px;width:363px;height:1px;background:#aca899"></div>
<span class="t" style="left:228px;width:98.500px;text-align:right;top:219px;letter-spacing:-.2px">1740</span>
<span class="t" style="left:331px;top:219px;letter-spacing:-.2px">037534650</span>
<span class="t" style="left:459px;width:79.500px;text-align:right;top:219px;letter-spacing:-.2px">34889</span>
<div class="a" style="left:201px;top:235px;width:11px;height:19px;background:#ece9d8;border-top:1px solid #fff;border-bottom:1px solid #aca899"></div>
<div class="a" style="left:228px;top:253px;width:363px;height:1px;background:#aca899"></div>
<span class="t" style="left:228px;width:98.500px;text-align:right;top:238px;letter-spacing:-.2px">1684</span>
<span class="t" style="left:331px;top:238px;letter-spacing:-.2px">038957036</span>
<span class="t" style="left:459px;width:79.500px;text-align:right;top:238px;letter-spacing:-.2px">45829</span>
<div class="a" style="left:201px;top:254px;width:11px;height:19px;background:#ece9d8;border-top:1px solid #fff;border-bottom:1px solid #aca899"></div>
<div class="a" style="left:228px;top:272px;width:363px;height:1px;background:#aca899"></div>
<span class="t" style="left:228px;width:98.500px;text-align:right;top:257px;letter-spacing:-.2px">1643</span>
<span class="t" style="left:331px;top:257px;letter-spacing:-.2px">023857807</span>
<span class="t" style="left:459px;width:79.500px;text-align:right;top:257px;letter-spacing:-.2px">29384</span>
<div class="a" style="left:201px;top:273px;width:11px;height:19px;background:#ece9d8;border-top:1px solid #fff;border-bottom:1px solid #aca899"></div>
<div class="a" style="left:228px;top:291px;width:363px;height:1px;background:#aca899"></div>
<span class="t" style="left:228px;width:98.500px;text-align:right;top:276px;letter-spacing:-.2px">1751</span>
<span class="t" style="left:331px;top:276px;letter-spacing:-.2px">032547384</span>
<span class="t" style="left:459px;width:79.500px;text-align:right;top:276px;letter-spacing:-.2px">34992</span>
<div class="a" style="left:201px;top:292px;width:11px;height:19px;background:#ece9d8;border-top:1px solid #fff;border-bottom:1px solid #aca899"></div>
<div class="a" style="left:228px;top:310px;width:363px;height:1px;background:#aca899"></div>
<span class="t" style="left:228px;width:98.500px;text-align:right;top:295px;letter-spacing:-.2px">1607</span>
<span class="t" style="left:331px;top:295px;letter-spacing:-.2px">501787474</span>
<span class="t" style="left:459px;width:79.500px;text-align:right;top:295px;letter-spacing:-.2px">61300</span>
<div class="a" style="left:201px;top:311px;width:11px;height:19px;background:#ece9d8;border-top:1px solid #fff;border-bottom:1px solid #aca899"></div>
<div class="a" style="left:228px;top:329px;width:363px;height:1px;background:#aca899"></div>
<span class="t" style="left:228px;width:98.500px;text-align:right;top:314px;letter-spacing:-.2px">1576</span>
<span class="t" style="left:331px;top:314px;letter-spacing:-.2px">017429926</span>
<span class="t" style="left:459px;width:79.500px;text-align:right;top:314px;letter-spacing:-.2px">68940</span>
<div class="a" style="left:201px;top:330px;width:11px;height:19px;background:#ece9d8;border-top:1px solid #fff;border-bottom:1px solid #aca899"></div>
<div class="a" style="left:228px;top:348px;width:363px;height:1px;background:#aca899"></div>
<span class="t" style="left:228px;width:98.500px;text-align:right;top:333px;letter-spacing:-.2px">1191</span>
<span class="t" style="left:331px;top:333px;letter-spacing:-.2px">023749270</span>
<span class="t" style="left:459px;width:79.500px;text-align:right;top:333px;letter-spacing:-.2px">45900</span>
<div class="a" style="left:201px;top:349px;width:11px;height:19px;background:#ece9d8;border-top:1px solid #fff;border-bottom:1px solid #aca899"></div>
<div class="a" style="left:228px;top:367px;width:363px;height:1px;background:#aca899"></div>
<span class="t" style="left:228px;width:98.500px;text-align:right;top:352px;letter-spacing:-.2px">409</span>
<span class="t" style="left:331px;top:352px;letter-spacing:-.2px">048781192</span>
<span class="t" style="left:459px;width:79.500px;text-align:right;top:352px;letter-spacing:-.2px">46550</span>
<div class="a" style="left:201px;top:368px;width:11px;height:19px;background:#ece9d8;border-top:1px solid #fff;border-bottom:1px solid #aca899"></div>
<div class="a" style="left:228px;top:386px;width:363px;height:1px;background:#aca899"></div>
<span class="t" style="left:228px;width:98.500px;text-align:right;top:371px;letter-spacing:-.2px">992</span>
<span class="t" style="left:331px;top:371px;letter-spacing:-.2px">023487085</span>
<span class="t" style="left:459px;width:79.500px;text-align:right;top:371px;letter-spacing:-.2px">34011</span>
<div class="a" style="left:201px;top:387px;width:11px;height:19px;background:#ece9d8;border-top:1px solid #fff;border-bottom:1px solid #aca899"></div>
<div class="a" style="left:228px;top:405px;width:363px;height:1px;background:#aca899"></div>
<span class="t" style="left:228px;width:98.500px;text-align:right;top:390px;letter-spacing:-.2px">888</span>
<span class="t" style="left:331px;top:390px;letter-spacing:-.2px">036102935</span>
<span class="t" style="left:459px;width:79.500px;text-align:right;top:390px;letter-spacing:-.2px">28300</span>
<div class="a" style="left:201px;top:406px;width:11px;height:19px;background:#ece9d8;border-top:1px solid #fff;border-bottom:1px solid #aca899"></div>
<div class="a" style="left:228px;top:424px;width:363px;height:1px;background:#aca899"></div>
<span class="t" style="left:228px;width:98.500px;text-align:right;top:409px;letter-spacing:-.2px">591</span>
<span class="t" style="left:331px;top:409px;letter-spacing:-.2px">056872399</span>
<span class="t" style="left:459px;width:79.500px;text-align:right;top:409px;letter-spacing:-.2px">45450</span>
<div class="a" style="left:201px;top:425px;width:11px;height:19px;background:#ece9d8;border-top:1px solid #fff;border-bottom:1px solid #aca899"></div>
<div class="a" style="left:228px;top:443px;width:363px;height:1px;background:#aca899"></div>
<span class="t" style="left:228px;width:98.500px;text-align:right;top:428px;letter-spacing:-.2px">318</span>
<span class="t" style="left:331px;top:428px;letter-spacing:-.2px">079349168</span>
<span class="t" style="left:459px;width:79.500px;text-align:right;top:428px;letter-spacing:-.2px">41700,75</span>
<div class="a" style="left:201px;top:444px;width:11px;height:19px;background:#ece9d8;border-top:1px solid #fff;border-bottom:1px solid #aca899"></div>
<div class="a" style="left:228px;top:462px;width:363px;height:1px;background:#aca899"></div>
<span class="t" style="left:228px;width:98.500px;text-align:right;top:447px;letter-spacing:-.2px">207</span>
<span class="t" style="left:331px;top:447px;letter-spacing:-.2px">501708992</span>
<span class="t" style="left:459px;width:79.500px;text-align:right;top:447px;letter-spacing:-.2px">53870</span>
<div class="a" style="left:201px;top:463px;width:11px;height:19px;background:#ece9d8;border-top:1px solid #fff;border-bottom:1px solid #aca899"></div>
<div class="a" style="left:228px;top:481px;width:363px;height:1px;background:#aca899"></div>
<span class="t" style="left:228px;width:98.500px;text-align:right;top:466px;letter-spacing:-.2px">184</span>
<span class="t" style="left:331px;top:466px;letter-spacing:-.2px">025481943</span>
<span class="t" style="left:459px;width:79.500px;text-align:right;top:466px;letter-spacing:-.2px">36490</span>
<div class="a" style="left:201px;top:482px;width:11px;height:19px;background:#ece9d8;border-top:1px solid #fff;border-bottom:1px solid #aca899"></div>
<div class="a" style="left:228px;top:500px;width:363px;height:1px;background:#aca899"></div>
<span class="t" style="left:228px;width:98.500px;text-align:right;top:485px;letter-spacing:-.2px">1062</span>
<span class="t" style="left:331px;top:485px;letter-spacing:-.2px">019887257</span>
<span class="t" style="left:459px;width:79.500px;text-align:right;top:485px;letter-spacing:-.2px">54900</span>
<div class="a" style="left:201px;top:501px;width:11px;height:18px;background:#c2d5f5;border-top:1px solid #fff;border-bottom:1px solid #aca899"></div>
<div class="a" style="left:213px;top:501px;width:378px;height:18px;background:#316ac5;outline:1px dotted #d9a24a;outline-offset:-1px"></div>
<svg class="a" style="left:205px;top:505px" width="6" height="9" viewBox="0 0 6 9"><path d="M0 0v9l5.5-4.5z" fill="#000"/></svg>
<svg class="a" style="left:216px;top:505px" width="9" height="9" viewBox="0 0 9 9"><rect x=".5" y=".5" width="8" height="8" rx="1" fill="url(#eb)" stroke="#7898b5"/><path d="M2 4.5h5M4.5 2v5" stroke="#000" stroke-width="1"/></svg>
<span class="t" style="left:229.3px;top:504px;letter-spacing:-0.179px;color:#fff;">DepartmentName : R &amp; D</span>
<div class="a" style="left:201px;top:519px;width:11px;height:18px;background:#ece9d8;border-top:1px solid #fff;border-bottom:1px solid #aca899"></div>
<div class="a" style="left:213px;top:536px;width:378px;height:1px;background:#aca899"></div>
<svg class="a" style="left:216px;top:523px" width="9" height="9" viewBox="0 0 9 9"><rect x=".5" y=".5" width="8" height="8" rx="1" fill="url(#eb)" stroke="#7898b5"/><path d="M2 4.5h5M4.5 2v5" stroke="#000" stroke-width="1"/></svg>
<span class="t" style="left:229.3px;top:522px;letter-spacing:-0.232px;color:#000;">DepartmentName : Sales</span>
<div class="a" style="left:201px;top:537px;width:11px;height:18px;background:#ece9d8;border-top:1px solid #fff;border-bottom:1px solid #aca899"></div>
<div class="a" style="left:213px;top:554px;width:378px;height:1px;background:#aca899"></div>
<svg class="a" style="left:216px;top:541px" width="9" height="9" viewBox="0 0 9 9"><rect x=".5" y=".5" width="8" height="8" rx="1" fill="url(#eb)" stroke="#7898b5"/><path d="M2 4.5h5M4.5 2v5" stroke="#000" stroke-width="1"/></svg>
<span class="t" style="left:229.3px;top:540px;letter-spacing:-0.192px;color:#000;">DepartmentName : Shipping</span>
<div class="a" style="left:201px;top:555px;width:390px;height:40px;background:#fff"></div>
<svg class="a" style="left:0;top:0" width="600" height="582" viewBox="0 0 600 582"><path d="M0 563 L10 567 L33 572.3 L66 576.5 L100 578.8 L133 579.8 L166 579.5 L200 577.5 L233 574 L267 568.5 L300 561.5 L333 554 L367 548 L400 545 L433 544 L467 544.3 L500 546 L533 549 L567 553 L600 558 L600 582 L0 582Z" fill="#fff"/><path d="M166 579.5 L200 577.5 L233 574 L267 568.5 L300 561.5 L333 554 L367 548 L400 545 L433 544 L467 544.3 L500 546 L533 549 L567 553 L600 558" fill="none" stroke="#c4c4c4" stroke-width="1"/></svg>
</body></html>
